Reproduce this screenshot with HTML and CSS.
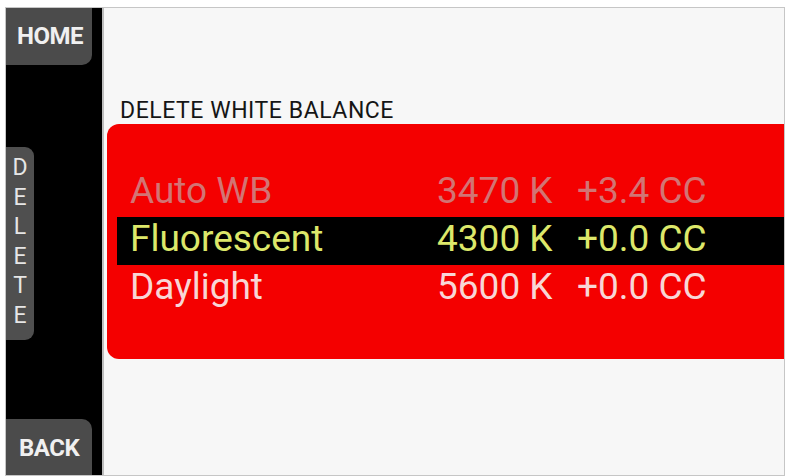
FILE: index.html
```html
<!DOCTYPE html>
<html lang="en">
<head>
<meta charset="utf-8">
<title>Delete White Balance</title>
<link rel="stylesheet" href="styles.css">
</head>
<body>
<div class="screen">
  <nav class="sidebar">
    <div class="key key-home">HOME</div>
    <div class="tab-delete">
      <span>D</span><span>E</span><span>L</span><span>E</span><span>T</span><span>E</span>
    </div>
    <div class="key key-back">BACK</div>
  </nav>
  <main class="content">
    <div class="title">DELETE WHITE BALANCE</div>
    <section class="panel">
      <div class="row row-dim">
        <span class="name">Auto WB</span>
        <span class="kelvin">3470 K</span>
        <span class="cc">+3.4 CC</span>
      </div>
      <div class="row row-selected">
        <span class="name">Fluorescent</span>
        <span class="kelvin">4300 K</span>
        <span class="cc">+0.0 CC</span>
      </div>
      <div class="row row-normal">
        <span class="name">Daylight</span>
        <span class="kelvin">5600 K</span>
        <span class="cc">+0.0 CC</span>
      </div>
    </section>
  </main>
</div>
</body>
</html>
```

FILE: styles.css
```css
html, body {
  margin: 0;
  padding: 0;
  background: #ffffff;
}

body {
  width: 787px;
  height: 476px;
  overflow: hidden;
  font-family: Roboto, "Liberation Sans", sans-serif;
}

.screen {
  margin: 7px 0 0 5px;
  width: 778px;
  height: 467px;
  border: 1px solid #c6c6c6;
  display: flex;
}

/* left soft-key column */
.sidebar {
  width: 96px;
  background: #000000;
  border-right: 2px solid #bdbdbd;
  display: flex;
  flex-direction: column;
  align-items: flex-start;
}

.key {
  width: 86px;
  background: #4b4b4b;
  color: #f0f0f0;
  font-weight: 700;
  font-size: 24px;
  letter-spacing: -0.5px;
  box-sizing: border-box;
  padding-left: 11px;
}

.key-home {
  height: 57px;
  line-height: 56px;
  border-radius: 0 0 10px 0;
}

.key-back {
  margin-top: auto;
  height: 56px;
  line-height: 58px;
  padding-left: 13px;
  border-radius: 0 10px 0 0;
}

.tab-delete {
  margin-top: 82px;
  width: 28px;
  height: 193px;
  background: #4f4f4f;
  border-radius: 0 9px 9px 0;
  display: flex;
  flex-direction: column;
  align-items: center;
  padding-top: 6px;
  box-sizing: border-box;
  color: #e6e6e6;
  font-size: 23px;
  line-height: 29.5px;
}

/* main area */
.content {
  flex: 1;
  background: #f7f7f7;
  padding-top: 90px;
  box-sizing: border-box;
}

.title {
  margin-left: 16px;
  font-size: 23px;
  line-height: 26px;
  letter-spacing: 0.55px;
  color: #151515;
}

.panel {
  margin-left: 3px;
  height: 235px;
  background: #f40000;
  border-radius: 12px 0 0 12px;
  padding-top: 45px;
  box-sizing: border-box;
}

.row {
  margin-left: 10px;
  height: 48px;
  padding-left: 13px;
  display: grid;
  grid-template-columns: 307px 140px auto;
  font-size: 37px;
  line-height: 44px;
  white-space: nowrap;
}

.row-dim {
  color: #d27474;
}

.row-selected {
  background: #000000;
  color: #dde86a;
}

.row-normal {
  color: #f8d6d6;
}
```
